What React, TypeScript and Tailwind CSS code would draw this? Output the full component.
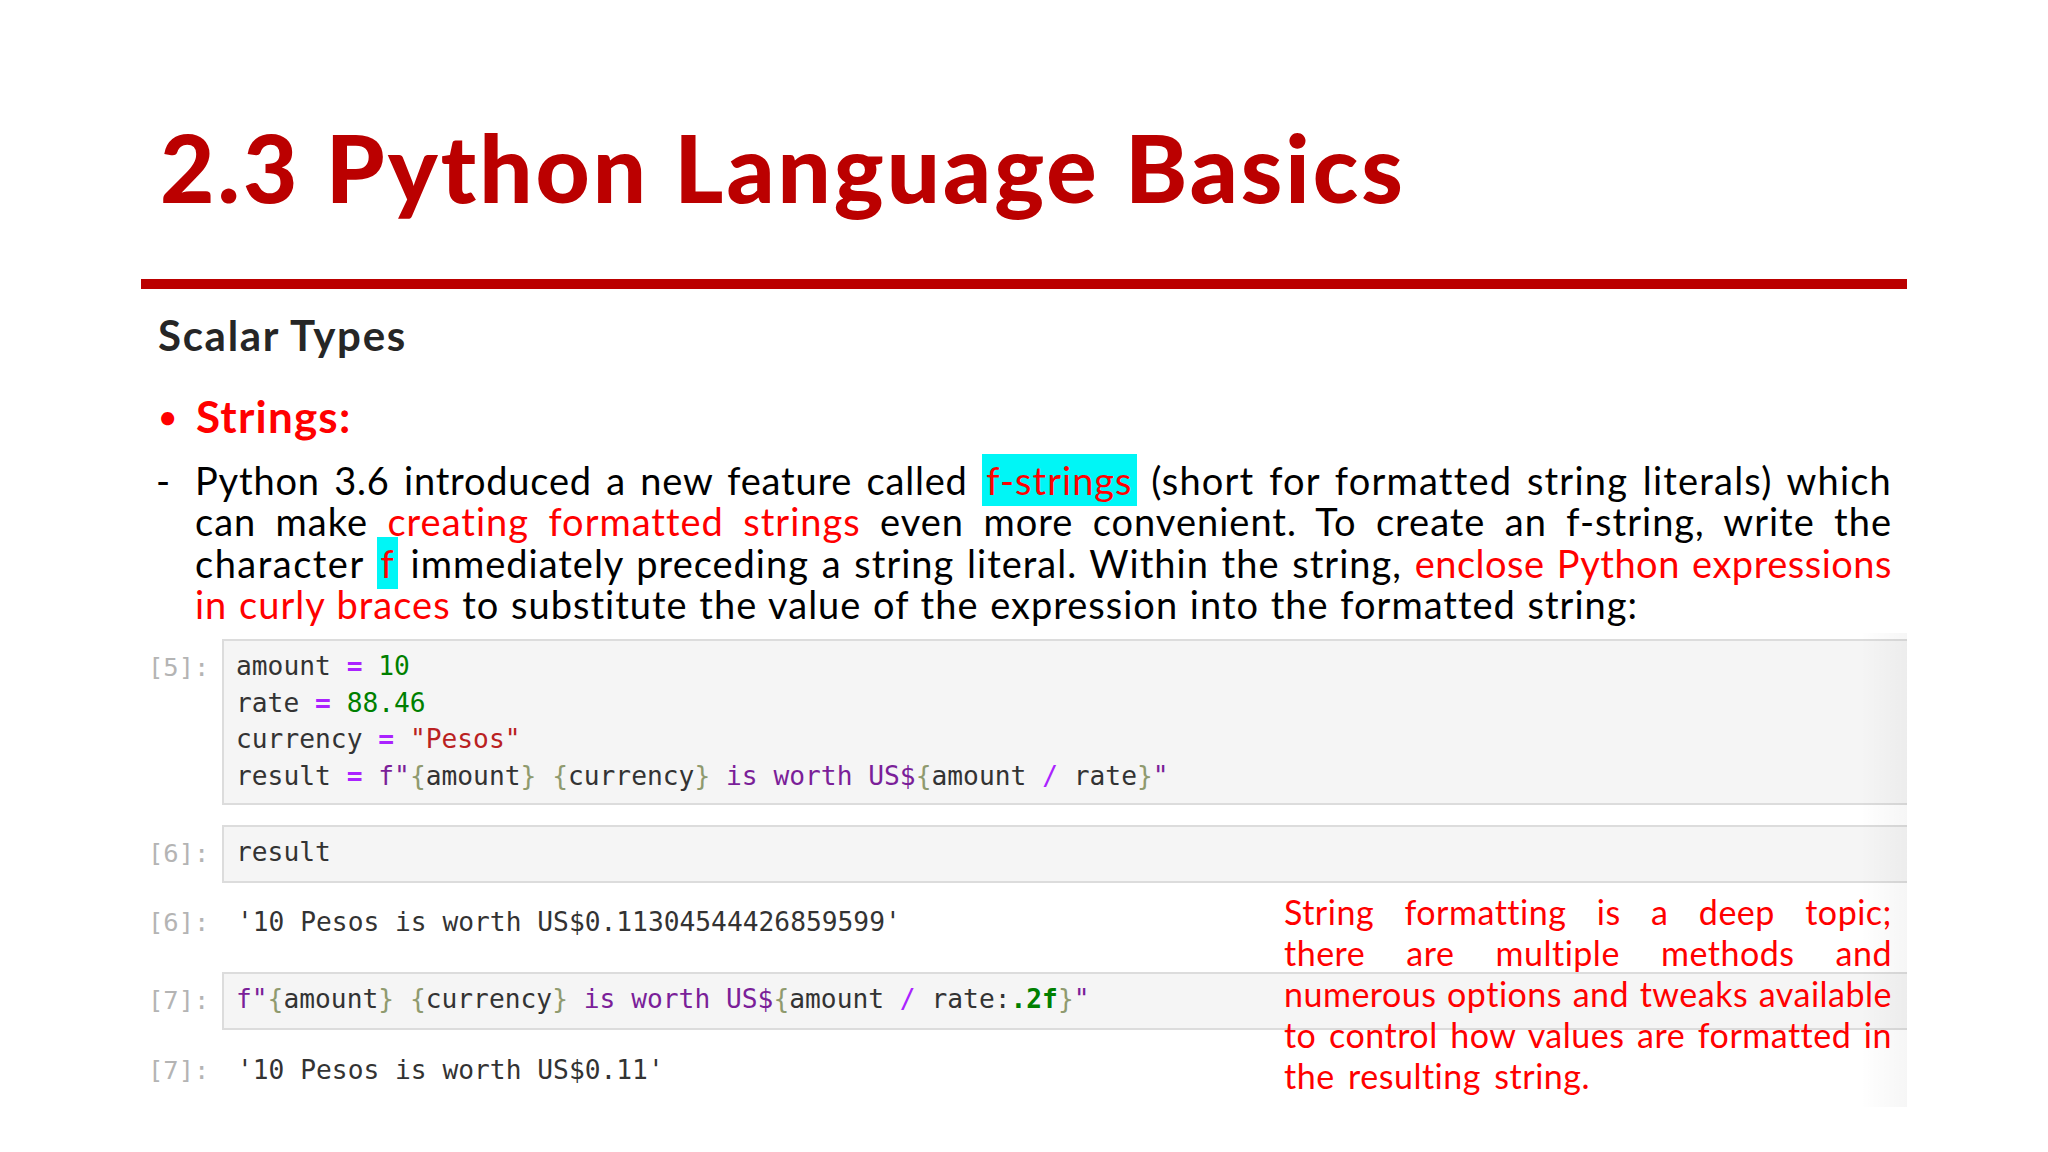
import React from "react";

const R = ({ children }: { children: React.ReactNode }) => <span className="text-[#ff0000]">{children}</span>;
const Op = ({ children }: { children: React.ReactNode }) => <span className="text-[#aa22ff] font-bold">{children}</span>;
const Br = ({ children }: { children: React.ReactNode }) => <span className="text-[#8f9a6e]">{children}</span>;
const S = ({ children }: { children: React.ReactNode }) => <span className="text-[#7b1f99]">{children}</span>;
const G = ({ children }: { children: React.ReactNode }) => <span className="text-[#008000]">{children}</span>;

function Line({ children, w }: { children: React.ReactNode; w?: string }) {
  return <div className={`${w ?? "w-full"} whitespace-nowrap [text-align:justify] [text-align-last:justify]`}>{children}</div>;
}

function Label({ n }: { n: number }) {
  return <div className="w-[81px] shrink-0 pl-[7px] pt-[10px] text-[#b4b4b4] text-[25.5px] leading-[36.5px]">[{n}]:</div>;
}

function Cell({ n, children, py }: { n: number; children: React.ReactNode; py: string }) {
  return (
    <div className="flex items-start">
      <Label n={n} />
      <div className={`flex-1 border-2 border-r-0 border-[#dcdcdc] bg-[#f5f5f5] pl-[12px] ${py} leading-[36.5px] whitespace-pre text-[26.25px] text-[#333333]`}>{children}</div>
    </div>
  );
}

function Output({ n, children }: { n: number; children: React.ReactNode }) {
  return (
    <div className="flex items-start">
      <Label n={n} />
      <div className="pl-[15px] pt-[10px] leading-[36.5px] whitespace-pre text-[26.25px] text-[#333333]">{children}</div>
    </div>
  );
}

export default function App() {
  return (
    <div className="relative w-[2048px] h-[1152px] overflow-hidden bg-white [font-family:Lato,'Liberation_Sans',sans-serif]">
      <div className="ml-[141px] w-[1766px]">
        <h1 className="ml-[19px] pt-[107px] h-[279px] text-[#bb0000] text-[94px] leading-[120px] font-black tracking-[3px] whitespace-nowrap">
          2.3 Python Language Basics
        </h1>
        <div className="h-[10px] bg-[#bb0000]" />
        <h2 className="ml-[17px] mt-[22px] text-[42px] leading-[48px] font-bold tracking-[1.7px] text-[#262626]">Scalar Types</h2>
        <div className="mt-[32px] flex text-[#ff0000] text-[44px] leading-[50px] font-bold tracking-[1.2px]">
          <span className="w-[55px] pl-[18px] text-[30px]">•</span>
          <span>Strings:</span>
        </div>
        <div className="mt-[19px] flex text-black text-[38px] leading-[41.3px] tracking-[1px]">
          <span className="w-[54px] shrink-0 pl-[15px]">-</span>
          <div className="w-[1697px]">
            <Line>
              <span className="tracking-[0.8px]">Python 3.6 introduced a new feature called</span>{" "}
              <span className="bg-[#00f6f6] text-[#ff0000] py-[3px] px-[4px]">f-strings</span>{" "}
              <span className="tracking-[1.2px]">(short for formatted string literals) which</span>
            </Line>
            <Line>
              can make <R>creating formatted strings</R> even more convenient. To create an f-string, write the
            </Line>
            <Line>
              <span className="tracking-[1.5px]">character</span>{" "}
              <span className="bg-[#00f6f6] text-[#ff0000] py-[3px] px-[3px]">f</span> immediately preceding a string literal. Within the string,{" "}
              <span className="text-[#ff0000] tracking-[0.5px]">enclose Python expressions</span>
            </Line>
            <Line w="w-[1443px]">
              <R>in curly braces</R> to substitute the value of the expression into the formatted string:
            </Line>
          </div>
        </div>

        <div className="mt-[14px] [font-family:'DejaVu_Sans_Mono',monospace]">
          <Cell n={5} py="pt-[7px] pb-[9px]">
            <div>amount <Op>=</Op> <G>10</G></div>
            <div>rate <Op>=</Op> <G>88.46</G></div>
            <div>currency <Op>=</Op> <span className="text-[#ba2121]">"Pesos"</span></div>
            <div>
              result <Op>=</Op> <S>f"</S><Br>{"{"}</Br>amount<Br>{"}"}</Br> <Br>{"{"}</Br>currency<Br>{"}"}</Br> <S>is worth US$</S><Br>{"{"}</Br>amount <span className="text-[#aa22ff]">/</span> rate<Br>{"}"}</Br><S>"</S>
            </div>
          </Cell>
          <div className="mt-[20px]">
            <Cell n={6} py="pt-[7px] pb-[10px]">result</Cell>
          </div>
          <div className="mt-[11px]">
            <Output n={6}>'10 Pesos is worth US$0.11304544426859599'</Output>
          </div>
          <div className="mt-[32px]">
            <Cell n={7} py="pt-[7px] pb-[10px]">
              <S>f"</S><Br>{"{"}</Br>amount<Br>{"}"}</Br> <Br>{"{"}</Br>currency<Br>{"}"}</Br> <S>is worth US$</S><Br>{"{"}</Br>amount <span className="text-[#aa22ff]">/</span> rate:<span className="text-[#008000] font-bold">.2f</span><Br>{"}"}</Br><S>"</S>
            </Cell>
          </div>
          <div className="mt-[12px]">
            <Output n={7}>'10 Pesos is worth US$0.11'</Output>
          </div>
        </div>
      </div>

      <div className="absolute left-[1860px] top-[633px] w-[47px] h-[474px] bg-gradient-to-r from-transparent to-[#00000009]" />

      <div className="absolute left-[1284px] top-[891px] w-[608px] text-[#ff0000] text-[34px] leading-[41px] tracking-[0.5px]">
        <Line>String formatting is a deep topic;</Line>
        <Line>there are multiple methods and</Line>
        <Line>numerous options and tweaks available</Line>
        <Line>to control how values are formatted in</Line>
        <Line w="w-[306px]">the resulting string.</Line>
      </div>
    </div>
  );
}
